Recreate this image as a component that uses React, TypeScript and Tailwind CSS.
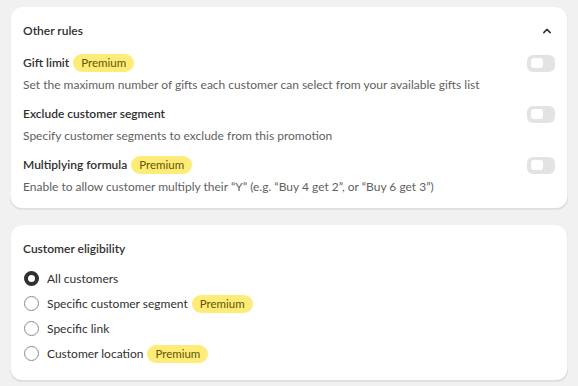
import React from "react";

type Rule = {
  title: string;
  description: string;
  premium?: boolean;
};

const rules: Rule[] = [
  {
    title: "Gift limit",
    description:
      "Set the maximum number of gifts each customer can select from your available gifts list",
    premium: true,
  },
  {
    title: "Exclude customer segment",
    description: "Specify customer segments to exclude from this promotion",
  },
  {
    title: "Multiplying formula",
    description:
      "Enable to allow customer multiply their \u201cY\u201d (e.g. \u201cBuy 4 get 2\u201d, or \u201cBuy 6 get 3\u201d)",
    premium: true,
  },
];

const options = [
  { label: "All customers", checked: true },
  { label: "Specific customer segment", premium: true },
  { label: "Specific link" },
  { label: "Customer location", premium: true },
];

const PremiumBadge = () => (
  <span className="inline-flex h-[18px] items-center rounded-full bg-[#ffeb78] px-2 text-[11.5px] text-[#5e5700]">
    Premium
  </span>
);

const Toggle = () => (
  <div className="flex h-[17px] w-[28px] items-center rounded-[6px] bg-[#e3e3e3] px-[4px]">
    <div className="h-[10px] w-[12px] rounded-[3px] bg-white" />
  </div>
);

const Radio = ({ checked }: { checked?: boolean }) =>
  checked ? (
    <span className="h-[15px] w-[15px] rounded-full border-[4px] border-[#303030] bg-white" />
  ) : (
    <span className="h-[15px] w-[15px] rounded-full border border-[#8a8a8a] bg-white" />
  );

const cardShadow =
  "shadow-[0_1px_0_0_rgba(26,26,26,0.07),inset_0_-1px_0_0_rgba(0,0,0,0.12),inset_1px_0_0_0_rgba(0,0,0,0.06),inset_-1px_0_0_0_rgba(0,0,0,0.08)]";

export default function App() {
  return (
    <div
      className="flex min-h-screen flex-col gap-4 bg-[#f1f1f1] px-[10px] pt-[7px] text-[12px] text-[#303030]"
      style={{ fontFamily: 'Lato, "Open Sans", sans-serif' }}
    >
      <div className={`rounded-xl bg-white px-[13px] pt-[14px] pb-3 ${cardShadow}`}>
        <div className="flex h-5 items-center justify-between">
          <h2 className="font-semibold">Other rules</h2>
          <svg width="10" height="10" viewBox="0 0 10 10" className="mr-[3px]">
            <path
              d="M1.8 6.6 L5 3.4 L8.2 6.6"
              fill="none"
              stroke="#303030"
              strokeWidth="1.5"
              strokeLinecap="round"
              strokeLinejoin="round"
            />
          </svg>
        </div>
        <div className="mt-[10px] flex flex-col gap-[7px]">
          {rules.map((rule) => (
            <div key={rule.title} className="flex flex-col">
              <div className="flex h-6 items-center justify-between">
                <div className="flex items-center gap-1">
                  <span className="font-semibold">{rule.title}</span>
                  {rule.premium && <PremiumBadge />}
                </div>
                <Toggle />
              </div>
              <p className="leading-5 text-[#616161]">{rule.description}</p>
            </div>
          ))}
        </div>
      </div>

      <div className={`rounded-xl bg-white px-[13px] pt-[14px] pb-[15px] ${cardShadow}`}>
        <h2 className="flex h-5 items-center font-semibold">Customer eligibility</h2>
        <div className="mt-[7px] flex flex-col">
          {options.map((opt) => (
            <label
              key={opt.label}
              className="flex h-[25px] items-center gap-2 pl-px"
            >
              <Radio checked={opt.checked} />
              <span className="flex items-center gap-1">
                {opt.label}
                {opt.premium && <PremiumBadge />}
              </span>
            </label>
          ))}
        </div>
      </div>
    </div>
  );
}
